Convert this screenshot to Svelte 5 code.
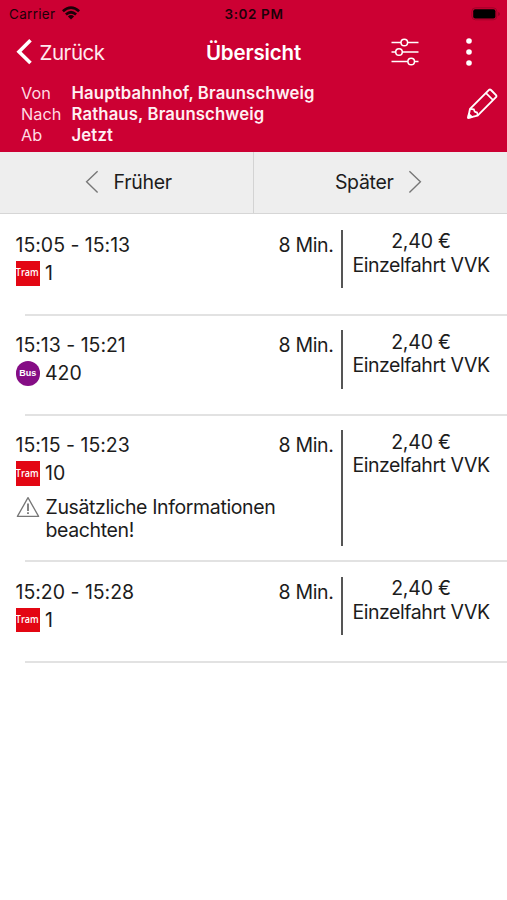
<script>
  const trips = [
    { time: '15:05 - 15:13', kind: 'Tram', line: '1' },
    { time: '15:13 - 15:21', kind: 'Bus', line: '420' },
    { time: '15:15 - 15:23', kind: 'Tram', line: '10', info: ['Zusätzliche Informationen', 'beachten!'] },
    { time: '15:20 - 15:28', kind: 'Tram', line: '1' }
  ];
</script>

<div class="screen">
  <header>
    <div class="status">
      <div class="carrier">
        <span>Carrier</span>
        <svg width="18" height="14" viewBox="0 0 18 14">
          <g fill="none" stroke="#1c0008" stroke-width="2.7">
            <path d="M.9 5.2Q9 -2 17.1 5.2" />
            <path d="M3.9 8.5Q9 4 14.1 8.5" />
          </g>
          <path d="M9 13.6L5.9 10.4Q9 7.8 12.1 10.4Z" fill="#1c0008" />
        </svg>
      </div>
      <span class="clock">3:02 PM</span>
      <div class="battery">
        <svg width="30" height="14" viewBox="0 0 30 14">
          <rect x=".8" y=".8" width="25" height="12" rx="3.6" fill="none" stroke="#a0002a" stroke-width="1" />
          <rect x="2.2" y="2.2" width="22.2" height="9.2" rx="2" fill="#000" />
          <path d="M27.3 5v4q1.5-.6 1.5-2t-1.5-2" fill="#8b0025" />
        </svg>
      </div>
    </div>
    <nav>
      <div class="back">
        <svg width="17" height="28" viewBox="0 0 17 28"><path d="M14.5 2.3L3 13.7L14.5 25" fill="none" stroke="#fff" stroke-width="3.6" stroke-linejoin="miter" /></svg>
        <span>Zurück</span>
      </div>
      <h1>Übersicht</h1>
      <div class="actions">
        <svg class="filter" width="28" height="28" viewBox="0 0 28 28" fill="#c03" stroke="#fff" stroke-width="1.5">
          <path d="M.5 4.5h27M.5 14h27M.5 23.5h27" />
          <circle cx="13.3" cy="4.5" r="3.3" /><circle cx="8" cy="14" r="3.3" /><circle cx="20.2" cy="23.5" r="3.3" />
        </svg>
        <svg width="6" height="28" viewBox="0 0 6 28" fill="#fff"><circle cx="3" cy="3" r="2.8" /><circle cx="3" cy="14" r="2.8" /><circle cx="3" cy="25" r="2.8" /></svg>
      </div>
    </nav>
    <div class="query">
      <dl>
        <dt>Von</dt><dd>Hauptbahnhof, Braunschweig</dd>
        <dt>Nach</dt><dd>Rathaus, Braunschweig</dd>
        <dt>Ab</dt><dd>Jetzt</dd>
      </dl>
      <svg width="32" height="32" viewBox="0 0 32 32" fill="none" stroke="#fff" stroke-width="1.9" stroke-linejoin="round">
        <path d="M2.2 29.8L4 20.9L23 1.9Q24 1.2 25 2L30 7.2Q30.8 8.2 30 9.2L11.6 27.6Z" />
        <path d="M4 20.9L8 21.4Q8 24.2 11 24.2L11.6 27.6M19.8 4.9L27.1 12.1" stroke-width="1.6" />
        <path d="M2.2 29.8L2.9 26.2L5.8 29Z" fill="#fff" />
      </svg>
    </div>
  </header>

  <div class="pager">
    <button>
      <svg width="14" height="24" viewBox="0 0 14 24"><path d="M12.6 1.2L1.6 11.8L12.6 22.4" fill="none" stroke="#777" stroke-width="1.4" /></svg>
      <span>Früher</span>
    </button>
    <button class="later">
      <span>Später</span>
      <svg width="14" height="24" viewBox="0 0 14 24"><path d="M1.4 1.2L12.4 11.8L1.4 22.4" fill="none" stroke="#777" stroke-width="1.4" /></svg>
    </button>
  </div>

  <main>
    {#each trips as trip}
      <article class:noted={trip.info}>
        <section class="trip">
          <div class="top"><span class="time">{trip.time}</span><span class="duration">8 Min.</span></div>
          <div class="line">
            <span class="badge" class:bus={trip.kind === 'Bus'}><span>{trip.kind}</span></span>
            <span class="number">{trip.line}</span>
          </div>
          {#if trip.info}
            <div class="info">
              <svg width="24" height="22" viewBox="0 0 24 22" fill="none" stroke="#777" stroke-width="1.3" stroke-linejoin="round">
                <path d="M12 1.6L22.6 20.4H1.4Z" /><path d="M12 7.5v7.5M12 16.3v1.8" stroke-width="1.8" />
              </svg>
              <p>{trip.info[0]}<br />{trip.info[1]}</p>
            </div>
          {/if}
        </section>
        <section class="price"><span class="amount">2,40 €</span><span class="fare">Einzelfahrt VVK</span></section>
      </article>
    {/each}
  </main>
</div>

<style>
  :global(body) { margin: 0; background: #fff; }
  .screen { width: 507px; height: 900px; overflow: hidden; background: #fff; color: #1c1c1c; font: 19.5px/23.3px Inter, "Liberation Sans", sans-serif; box-sizing: border-box; }
  .screen :global(svg) { display: block; flex: none; }
  span, dt, dd, h1 { white-space: nowrap; }
  header { height: 152.4px; background: #c03; color: #fff; box-sizing: border-box; }
  .status { height: 28px; display: grid; grid-template-columns: 1fr auto 1fr; align-items: center; color: #1c0008; font-size: 13.5px; line-height: 28px; padding: 0 7px 0 9px; }
  .carrier { display: flex; align-items: center; gap: 7px; letter-spacing: .3px; }
  .carrier svg { margin-top: -2px; }
  .clock { font-weight: 600; padding-right: 1px; letter-spacing: .6px; }
  .battery { display: flex; justify-content: flex-end; }
  .battery svg { margin: -1px -1px 0 0; }
  nav { height: 48px; display: grid; grid-template-columns: 1fr auto 1fr; align-items: center; padding: 0 35px 0 16px; }
  .back { display: flex; align-items: center; gap: 6.5px; font-size: 20.5px; letter-spacing: -.45px; color: #ffe9ee; }
  .back span { padding-top: 1px; }
  h1 { margin: 0; font-size: 20.5px; font-weight: 600; line-height: 24px; letter-spacing: -.15px; padding: 1px 0 0 19px; }
  .actions { display: flex; justify-content: flex-end; gap: 47px; }
  .query { display: flex; justify-content: space-between; padding: 6.5px 9px 0 21px; }
  dl { margin: 0; display: grid; grid-template-columns: 50.5px auto; font-size: 16.3px; line-height: 21px; }
  dt { color: #ffdce4; }
  dd { margin: 0; font-size: 16.7px; letter-spacing: .15px; font-weight: 600; color: #fff0f3; }
  .query svg { margin-top: 5px; }
  .pager { display: flex; height: 62.1px; box-sizing: border-box; background: #eee; border-bottom: 1.5px solid #d6d6d6; }
  button { flex: 1; display: flex; align-items: center; justify-content: center; gap: 14.5px; border: 0; padding: 0 0 1px 4px; background: none; color: #1c1c1c; font: inherit; letter-spacing: -.3px; }
  .later { border-left: 1.5px solid #d3d3d3; padding-left: 0; padding-right: 4px; }
  button span { padding-top: 1px; }
  article { position: relative; display: flex; padding: 15.5px 0 26.2px; }
  article.noted { padding-bottom: 15px; }
  article::after { content: ""; position: absolute; left: 25px; right: 0; bottom: -1px; height: 2px; background: #e2e2e2; }
  .trip { width: 341px; box-sizing: border-box; padding: 3.8px 7.5px 0 15.5px; }
  .top { display: flex; justify-content: space-between; height: 27px; }
  .time { letter-spacing: -.02px; }
  .duration { letter-spacing: -.35px; }
  .line { display: flex; align-items: center; gap: 5px; height: 25px; }
  .badge { width: 24.5px; height: 24.5px; display: flex; align-items: center; justify-content: center; background: #e30613; color: #fff; font: 600 10.5px/12px "Open Sans", sans-serif; }
  .badge span { transform: translateY(-.8px) scaleX(.86); }
  .bus { border-radius: 50%; background: #850d85; font: bold 9px/12px "Liberation Sans", sans-serif; }
  .bus span { transform: none; }
  .info { display: flex; gap: 6px; padding: 9.5px 0 4.2px; }
  .info svg { margin-top: 0; }
  .info p { margin: 0; letter-spacing: -.37px; white-space: nowrap; }
  .price { flex: 1; border-left: 2px solid #555; min-height: 58.5px; display: flex; flex-direction: column; align-items: center; padding: .5px 8px 0 0; box-sizing: border-box; }
  .amount { letter-spacing: -.2px; }
  .fare { letter-spacing: -.44px; }
</style>
